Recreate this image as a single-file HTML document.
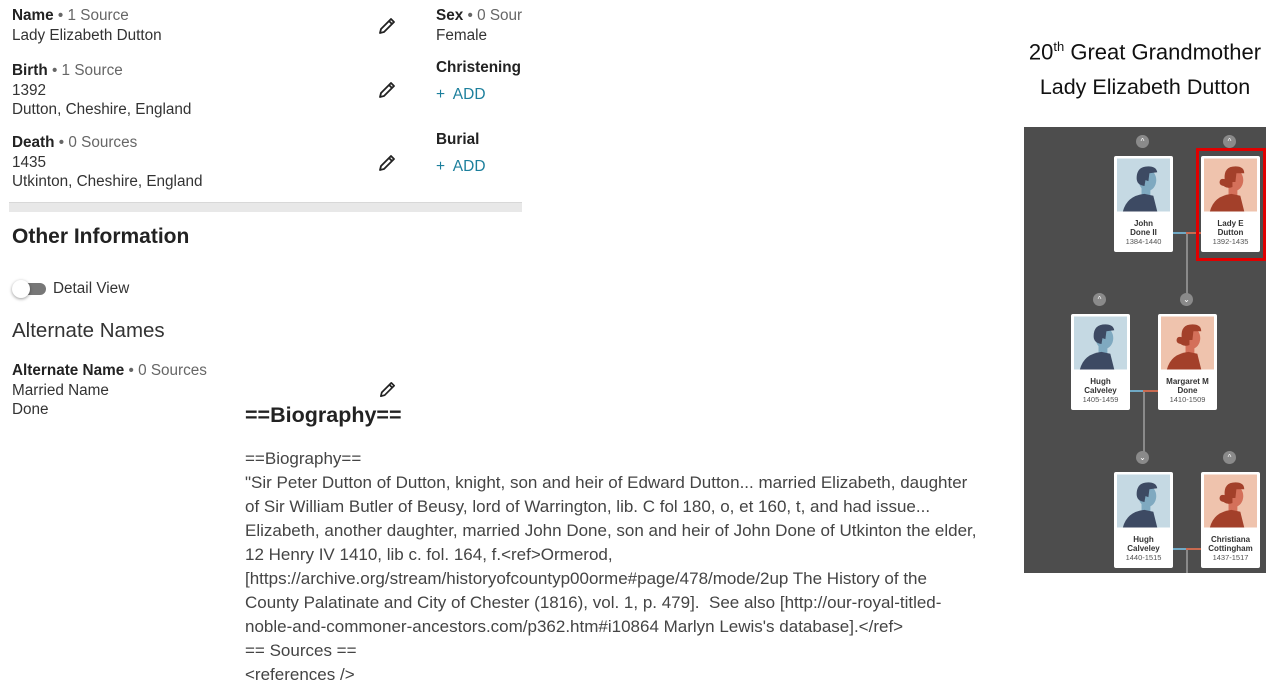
<!DOCTYPE html>
<html><head><meta charset="utf-8"><style>
*{margin:0;padding:0;box-sizing:border-box}
body{width:1266px;height:700px;background:#fff;position:relative;overflow:hidden;font-family:"Liberation Sans",sans-serif;color:#333}
.a{position:absolute;white-space:nowrap}
.t{font-size:15.3px;line-height:19.5px}
b{font-weight:bold;color:#222}
.g{color:#666}
.add{color:#1c7f9c;font-size:15.5px}
.bio{position:absolute;left:245px;top:447px;font-size:17px;line-height:24px;color:#444;white-space:nowrap}
.tree{position:absolute;left:1024px;top:127px;width:242px;height:446px;background:#4d4d4d;overflow:hidden}
.card{position:absolute;width:59px;height:96px;background:#fff;border-radius:2px}
.card svg{position:absolute;left:3px;top:2px}
.nm{position:absolute;top:63px;left:0;width:59px;text-align:center;font-size:8px;line-height:9px;color:#333;font-weight:bold}
.dt{font-weight:normal;color:#555;font-size:7.5px}
.c{position:absolute;width:13px;height:13px;border-radius:50%;background:#8a8a8a;color:#fff;font-size:8px;text-align:center;line-height:13px}
.v{position:absolute;width:2px;background:#8a8a8a}
.h{position:absolute;height:2px}
</style></head><body>
<svg width="0" height="0" style="position:absolute"><defs>
<symbol id="m" viewBox="0 0 54 54"><rect width="54" height="54" fill="#c5d9e3"/><rect x="25" y="28" width="9" height="12" fill="#7fa9c0"/><ellipse cx="31" cy="22" rx="9" ry="11" fill="#7fa9c0"/><path d="M20 20 q0-12 12-12 q8 0 9 6 l-8 1 l-1 8 l-3-1 l-1 6 q-8-1-8-8z" fill="#3d4a63"/><path d="M6 54 q4-16 22-18 l9 2 l4 16z" fill="#3d4a63"/></symbol>
<symbol id="f" viewBox="0 0 54 54"><rect width="54" height="54" fill="#efc3ad"/><rect x="25" y="28" width="9" height="12" fill="#d4705a"/><ellipse cx="31" cy="22" rx="9" ry="11" fill="#d4705a"/><path d="M21 21 q-1-13 11-13 q9 0 9 7 l-8 0 l-1 9 l-3 0 l0 5 q-5 2-9-1 q-5-1-4-5 q1-3 5-2z" fill="#a3402a"/><path d="M6 54 q4-16 22-18 l9 2 l4 16z" fill="#a3402a"/></symbol>
<symbol id="p" viewBox="0 0 20 20"><path d="M3 17 l1-4 L14 3 l3 3 L7 16z M12 5 l3 3 M3 17 l4-1" fill="none" stroke="#222" stroke-width="1.8" stroke-linejoin="round"/></symbol>
</defs></svg>

<div class="a t" style="left:12px;top:6px"><b>Name</b> <span class="g">• 1 Source</span><br>Lady Elizabeth Dutton</div>
<div class="a t" style="left:12px;top:61px"><b>Birth</b> <span class="g">• 1 Source</span><br>1392<br>Dutton, Cheshire, England</div>
<div class="a t" style="left:12px;top:133px"><b>Death</b> <span class="g">• 0 Sources</span><br>1435<br>Utkinton, Cheshire, England</div>
<svg class="a" style="left:377px;top:16px" width="20" height="20"><use href="#p"/></svg>
<svg class="a" style="left:377px;top:80px" width="20" height="20"><use href="#p"/></svg>
<svg class="a" style="left:377px;top:153px" width="20" height="20"><use href="#p"/></svg>
<svg class="a" style="left:378px;top:380px" width="19" height="19"><use href="#p"/></svg>
<div style="position:absolute;left:436px;top:0;width:86px;height:200px;overflow:hidden">
<div class="a t" style="left:0;top:6px"><b>Sex</b> <span class="g">• 0 Sources</span><br>Female</div>
<div class="a t" style="left:0;top:58px"><b>Christening</b></div>
<div class="a add" style="left:0;top:86px">+&nbsp; ADD</div>
<div class="a t" style="left:0;top:130px"><b>Burial</b></div>
<div class="a add" style="left:0;top:158px">+&nbsp; ADD</div>
</div>
<div class="a" style="left:9px;top:202px;width:513px;height:10px;background:#e8e8e8;border-top:1px solid #d8d8d8"></div>
<div class="a" style="left:12px;top:225px;font-size:21px;font-weight:bold;color:#222">Other Information</div>
<div class="a" style="left:15px;top:283px;width:31px;height:12px;border-radius:6px;background:#777"></div>
<div class="a" style="left:12px;top:280px;width:18px;height:18px;border-radius:50%;background:#fff;box-shadow:0 1px 3px rgba(0,0,0,.4)"></div>
<div class="a" style="left:53px;top:280px;font-size:15.3px;color:#333">Detail View</div>
<div class="a" style="left:12px;top:319px;font-size:20.5px;color:#333">Alternate Names</div>
<div class="a t" style="left:12px;top:361px"><b>Alternate Name</b> <span class="g">• 0 Sources</span><br>Married Name<br>Done</div>
<div class="a" style="left:245px;top:403px;font-size:21.5px;font-weight:bold;color:#222">==Biography==</div>
<div class="bio">==Biography==<br>"Sir Peter Dutton of Dutton, knight, son and heir of Edward Dutton... married Elizabeth, daughter<br>of Sir William Butler of Beusy, lord of Warrington, lib. C fol 180, o, et 160, t, and had issue...<br>Elizabeth, another daughter, married John Done, son and heir of John Done of Utkinton the elder,<br>12 Henry IV 1410, lib c. fol. 164, f.&lt;ref&gt;Ormerod,<br>[https://archive.org/stream/historyofcountyp00orme#page/478/mode/2up The History of the<br>County Palatinate and City of Chester (1816), vol. 1, p. 479].&nbsp; See also [http://our-royal-titled-<br>noble-and-commoner-ancestors.com/p362.htm#i10864 Marlyn Lewis's database].&lt;/ref&gt;<br>== Sources ==<br>&lt;references /&gt;</div>

<div class="a" style="left:1014px;top:34px;width:262px;text-align:center;font-size:22px;line-height:26px;color:#111">20<sup style="font-size:13px">th</sup> Great Grandmother</div>
<div class="a" style="left:1014px;top:74px;width:262px;text-align:center;font-size:21.5px;line-height:26px;color:#111">Lady Elizabeth Dutton</div>

<div class="tree">
<div class="v" style="left:162px;top:105px;height:66px"></div>
<div class="v" style="left:119px;top:263px;height:66px"></div>
<div class="v" style="left:162px;top:421px;height:30px"></div>
<div class="h" style="left:149px;top:105px;width:13px;background:#6fa8c4"></div><div class="h" style="left:162px;top:105px;width:15px;background:#c96a50"></div>
<div class="h" style="left:105px;top:263px;width:14px;background:#6fa8c4"></div><div class="h" style="left:119px;top:263px;width:15px;background:#c96a50"></div>
<div class="h" style="left:149px;top:421px;width:13px;background:#6fa8c4"></div><div class="h" style="left:162px;top:421px;width:15px;background:#c96a50"></div>
<div class="c" style="left:112px;top:8px">&#94;</div>
<div class="c" style="left:199px;top:8px">&#94;</div>
<div class="c" style="left:69px;top:166px">&#94;</div>
<div class="c" style="left:156px;top:166px">&#8964;</div>
<div class="c" style="left:112px;top:324px">&#8964;</div>
<div class="c" style="left:199px;top:324px">&#94;</div>
<div class="card" style="left:90px;top:29px"><svg width="53" height="54"><use href="#m"/></svg><div class="nm">John<br>Done II<br><span class="dt">1384-1440</span></div></div>
<div class="card" style="left:177px;top:29px"><svg width="53" height="54"><use href="#f"/></svg><div class="nm">Lady E<br>Dutton<br><span class="dt">1392-1435</span></div></div>
<div class="a" style="left:172px;top:21px;width:70px;height:113px;border:3px solid #e00000"></div>
<div class="card" style="left:47px;top:187px"><svg width="53" height="54"><use href="#m"/></svg><div class="nm">Hugh<br>Calveley<br><span class="dt">1405-1459</span></div></div>
<div class="card" style="left:134px;top:187px"><svg width="53" height="54"><use href="#f"/></svg><div class="nm">Margaret M<br>Done<br><span class="dt">1410-1509</span></div></div>
<div class="card" style="left:90px;top:345px"><svg width="53" height="54"><use href="#m"/></svg><div class="nm">Hugh<br>Calveley<br><span class="dt">1440-1515</span></div></div>
<div class="card" style="left:177px;top:345px"><svg width="53" height="54"><use href="#f"/></svg><div class="nm">Christiana<br>Cottingham<br><span class="dt">1437-1517</span></div></div>
</div>
</body></html>
